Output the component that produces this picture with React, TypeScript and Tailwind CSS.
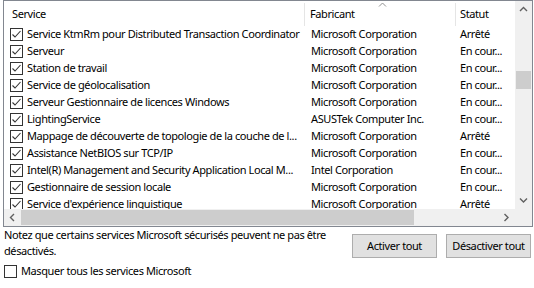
import React from "react";

const rows: [string, string, string][] = [
  ["Service KtmRm pour Distributed Transaction Coordinator", "Microsoft Corporation", "Arrêté"],
  ["Serveur", "Microsoft Corporation", "En cour..."],
  ["Station de travail", "Microsoft Corporation", "En cour..."],
  ["Service de géolocalisation", "Microsoft Corporation", "En cour..."],
  ["Serveur Gestionnaire de licences Windows", "Microsoft Corporation", "En cour..."],
  ["LightingService", "ASUSTek Computer Inc.", "En cour..."],
  ["Mappage de découverte de topologie de la couche de l...", "Microsoft Corporation", "Arrêté"],
  ["Assistance NetBIOS sur TCP/IP", "Microsoft Corporation", "En cour..."],
  ["Intel(R) Management and Security Application Local M...", "Intel Corporation", "En cour..."],
  ["Gestionnaire de session locale", "Microsoft Corporation", "En cour..."],
  ["Service d'expérience linguistique", "Microsoft Corporation", "Arrêté"],
];

function Check({ checked }: { checked: boolean }) {
  return (
    <svg width="13" height="13" viewBox="0 0 13 13" className="shrink-0">
      <rect x="0.5" y="0.5" width="12" height="12" fill="#fff" stroke="#333" />
      {checked && <polyline points="2.5,6.5 5,9 10.5,3" fill="none" stroke="#333" strokeWidth="1.1" />}
    </svg>
  );
}

function Chevron({ dir }: { dir: "up" | "down" | "left" | "right" }) {
  const pts: Record<string, string> = {
    up: "1,5 4.5,1.5 8,5",
    down: "1,1.5 4.5,5 8,1.5",
    left: "5,1 1.5,4.5 5,8",
    right: "1.5,1 5,4.5 1.5,8",
  };
  const w = dir === "up" || dir === "down" ? 9 : 7;
  const h = dir === "up" || dir === "down" ? 7 : 9;
  return (
    <svg width={w} height={h} viewBox={`0 0 ${w} ${h}`}>
      <polyline points={pts[dir]} fill="none" stroke="#606060" strokeWidth="1.4" />
    </svg>
  );
}

export default function App() {
  return (
    <div
      className="w-[534px] h-[288px] bg-white text-black text-[11px] tracking-[-0.4px] overflow-hidden"
      style={{ fontFamily: '"Noto Sans", "Open Sans", sans-serif' }}
    >
      <div className="ml-[3px] w-[530px] h-[227px] border border-[#828790] flex flex-col">
        <div className="flex h-[208px]">
          <div className="flex-1 overflow-hidden">
            <div className="relative flex h-[25px] items-center pt-[2px]">
              <div className="w-[301px] pl-[8px] border-r border-[#e5e5e5] h-full flex items-center">Service</div>
              <div className="w-[151px] pl-[5px] border-r border-[#e5e5e5] h-full flex items-center">Fabricant</div>
              <div className="flex-1 pl-[4px] h-full flex items-center">Statut</div>
              <svg width="9" height="5" viewBox="0 0 9 5" className="absolute left-[374px] top-[1px]">
                <polyline points="1,4.5 4.5,1 8,4.5" fill="none" stroke="#909090" strokeWidth="1" />
              </svg>
            </div>
            {rows.map(([s, f, st], i) => (
              <div key={i} className="flex h-[17px] items-center whitespace-nowrap">
                <div className="w-[301px] flex items-center pl-[6px] overflow-hidden">
                  <Check checked />
                  <span className="ml-[4px]">{s}</span>
                </div>
                <div className="w-[151px] pl-[6px] overflow-hidden">{f}</div>
                <div className="flex-1 pl-[4px] overflow-hidden">{st}</div>
              </div>
            ))}
          </div>
          <div className="w-[17px] bg-[#f0f0f0] flex flex-col items-center">
            <div className="h-[17px] flex items-center justify-center"><Chevron dir="up" /></div>
            <div className="flex-1 w-full relative">
              <div className="mt-[53px] mx-[1px] h-[18px] bg-[#cdcdcd]" />
            </div>
            <div className="h-[17px] flex items-center justify-center"><Chevron dir="down" /></div>
          </div>
        </div>
        <div className="flex h-[17px]">
          <div className="flex-1 bg-[#f0f0f0] flex items-center">
            <div className="w-[17px] h-full flex items-center justify-center"><Chevron dir="left" /></div>
            <div className="w-[393px] h-[15px] bg-[#cdcdcd]" />
            <div className="flex-1" />
            <div className="w-[17px] h-full flex items-center justify-center"><Chevron dir="right" /></div>
          </div>
          <div className="w-[17px] bg-[#f0f0f0]" />
        </div>
      </div>
      <div className="flex pl-[4px] pr-[3px]">
        <p className="leading-[16px] whitespace-nowrap">
          Notez que certains services Microsoft sécurisés peuvent ne pas être
          <br />
          désactivés.
        </p>
        <div className="ml-auto flex gap-[9px] pt-[7px]">
          <button className="w-[85px] h-[24px] bg-[#e1e1e1] border border-[#adadad] whitespace-nowrap">Activer tout</button>
          <button className="w-[85px] h-[24px] bg-[#e1e1e1] border border-[#adadad] whitespace-nowrap">Désactiver tout</button>
        </div>
      </div>
      <div className="flex items-center h-[17px] mt-[4px] pl-[4px]">
        <Check checked={false} />
        <span className="ml-[4px]">Masquer tous les services Microsoft</span>
      </div>
    </div>
  );
}
